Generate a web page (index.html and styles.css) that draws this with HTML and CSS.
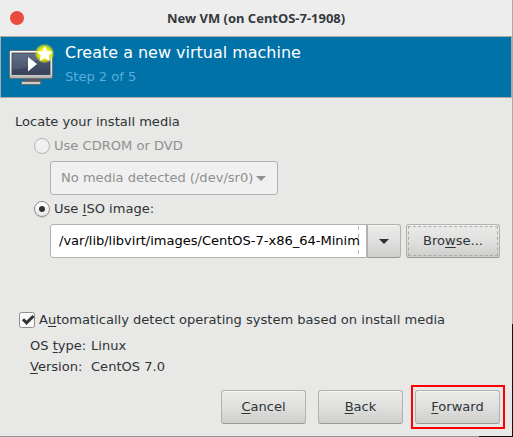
FILE: index.html
```
<!DOCTYPE html>
<html lang="en">
<head>
<meta charset="utf-8">
<title>New VM</title>
<link rel="stylesheet" href="styles.css">
</head>
<body>
<main class="window">
  <header class="titlebar"><span class="close"></span><h1>New VM (on CentOS-7-1908)</h1></header>
  <section class="banner">
    <svg class="vm-icon" width="48" height="48" viewBox="0 0 48 48">
      <defs>
        <linearGradient id="frame" x2="0" y2="1"><stop stop-color="#fff"/><stop offset=".8" stop-color="#ddd"/><stop offset="1" stop-color="#aaa"/></linearGradient>
        <linearGradient id="screen" x2="0" y2="1"><stop stop-color="#56637a"/><stop offset=".5" stop-color="#45526a"/><stop offset="1" stop-color="#354259"/></linearGradient>
        <radialGradient id="glow"><stop offset=".5" stop-color="#f2ef00"/><stop offset=".75" stop-color="#e2ea10" stop-opacity=".8"/><stop offset="1" stop-color="#e8f000" stop-opacity="0"/></radialGradient>
      </defs>
      <path d="M18 34h14l2 6H16z" fill="#555b5d"/>
      <rect x="13.5" y="38.5" width="19" height="3" rx="1" fill="#ccc" stroke="#696c68"/>
      <rect x="1.500" y="7.500" width="43" height="28" rx="1.500" fill="url(#frame)" stroke="#6d706c"/>
      <rect x="4" y="10" width="38" height="21.500" fill="url(#screen)" stroke="#303a4a" stroke-width=".8"/>
      <path d="M4 10h34L17 25 4 27z" fill="#fff" opacity=".08"/>
      <path d="M20 14v14.500L29 21z" fill="#fff"/>
      <circle cx="36.500" cy="10.500" r="10" fill="url(#glow)"/>
      <path d="M36.800 4l2 4.500 5 .5-3.800 3.200 1.200 4.800-4.400-2.500-4.400 2.500 1.200-4.800L29.800 9l5-.5z" fill="#fff" stroke="#fff" stroke-width="1.200" stroke-linejoin="round"/>
    </svg>
    <div class="heading"><h2>Create a new virtual machine</h2><p>Step 2 of 5</p></div>
  </section>
  <section class="content">
    <p class="locate">Locate your install media</p>
    <label class="choice disabled"><i class="radio"></i><span>Use CDROM or DVD</span></label>
    <div class="select disabled"><span>No media detected (/dev/sr0)</span><svg class="arrow" width="10" height="5"><path d="M0 0h10L5 5z"/></svg></div>
    <label class="choice iso"><i class="radio checked"></i><span>Use <u>I</u>SO image:</span></label>
    <div class="path-row">
      <div class="entry"><span>/var/lib/libvirt/images/CentOS-7-x86_64-Minim</span></div>
      <div class="drop"><svg class="arrow" width="10" height="5"><path d="M0 0h10L5 5z"/></svg></div>
      <button class="browse"><span>Bro<u>w</u>se...</span></button>
    </div>
    <label class="detect"><svg width="16" height="16" viewBox="0 0 16 16"><rect x=".5" y=".5" width="15" height="15" rx="2" fill="#f9f9f8" stroke="#8d8f8b"/><path d="M4 7.300l3.500 3.500L14.500 4" fill="none" stroke="#2e3436" stroke-width="3"/></svg><span>A<u>u</u>tomatically detect operating system based on install media</span></label>
    <dl class="details">
      <dt>OS <u>t</u>ype:</dt><dd>Linux</dd>
      <dt><u>V</u>ersion:</dt><dd>CentOS 7.0</dd>
    </dl>
    <footer>
      <button><u>C</u>ancel</button><button><u>B</u>ack</button><div class="highlight"><button><u>F</u>orward</button></div>
    </footer>
  </section>
</main>
</body>
</html>
```
FILE: styles.css
```
* { box-sizing: border-box; margin: 0; padding: 0; }
html { background: linear-gradient(#aaa 0 324px, #111 324px) right / 1px 100% no-repeat, linear-gradient(90deg, #929292 0 479px, #111 479px) bottom / 100% 1px no-repeat, #e8e8e6; }
body { width: 513px; height: 437px; overflow: hidden; font: 13.05px/20px "DejaVu Sans", sans-serif; color: #2e3436; }
.window { width: 512px; height: 436px; background: #e8e8e6; border-radius: 3px 3px 0 0; overflow: hidden; }
u { text-decoration: underline; text-decoration-thickness: 1px; text-underline-offset: 2px; text-decoration-skip-ink: none; }
.titlebar { height: 36px; background: #ededed; display: flex; align-items: center; padding-left: 10px; }
.close { width: 14px; height: 14px; border-radius: 50%; background: #e94b3c; }
h1 { margin-left: 143px; font: bold 12.97px/20px "Noto Sans", sans-serif; color: #353940; white-space: nowrap; }
.banner { height: 62px; border: 1px solid #aaaca7; background: #0072a8; display: flex; padding: 6px 0 0 7px; }
.heading { margin-left: 9px; color: #fff; }
h2 { font-size: 15.97px; font-weight: 400; line-height: 20px; }
.heading p { color: #59addd; line-height: 20px; margin-top: 4px; }
.content { padding-left: 15px; padding-top: 14px; white-space: nowrap; }
.choice { display: flex; align-items: center; gap: 4px; height: 20px; margin: 4px 0 0 19px; }
.radio { width: 16px; height: 16px; border: 1px solid #8e908c; border-radius: 50%; background: linear-gradient(#fff, #e6e6e4); display: grid; place-items: center; box-shadow: 0 1px #d2d2d0; }
.checked::before { content: ""; width: 6px; height: 6px; border-radius: 50%; background: #2e3436; }
.disabled { color: #8d918e; }
.disabled .radio { background: #f0f0f0; border-color: #b4b5b2; box-shadow: none; }
.arrow { fill: currentColor; }
.select { width: 228px; height: 34px; margin: 5px 0 0 35px; border: 1px solid #b2b3b0; border-radius: 3px; background: #f0f0f0; display: flex; align-items: center; padding: 0 11px 0 10px; justify-content: space-between; }
.path-row { display: flex; height: 34px; margin: 5px 0 0 35px; }
.entry { width: 317px; border: 1px solid #b0b2ad; border-radius: 3px 0 0 3px; background: repeating-linear-gradient(#bbb 0 4px, transparent 4px 8px) 307px 1px / 1px 30px no-repeat, #fff; padding: 6px 8px; color: #000; }
.entry span { letter-spacing: -.02px; }
.drop, button { border: 1px solid #b1b2af; border-bottom-color: #979996; background: linear-gradient(#ebebea, #dededd 55%, #cececc); box-shadow: inset 0 1px #f5f5f4; }
.drop { width: 34px; border-radius: 0 3px 3px 0; display: grid; place-items: center; }
button { width: 85px; height: 34px; border-radius: 3px; color: inherit; font: inherit; }
.browse { width: 94px; margin-left: 5px; padding: 1px; }
.browse span { display: block; height: 30px; line-height: 27px; border: 1px dashed #aaa; }
.detect { display: flex; align-items: center; gap: 4px; height: 20px; margin: 52px 0 0 4px; }
.details { display: grid; grid-template-columns: 61px auto; grid-auto-rows: 21px; margin: 6px 0 0 15px; }
footer { display: flex; margin: 7px 0 0 206px; align-items: center; gap: 12px; }
.iso { margin-top: 4px; }
.highlight { width: 94px; height: 44px; border: 2px solid #f00; padding: 3px 2px; margin-left: -4px; }
```
